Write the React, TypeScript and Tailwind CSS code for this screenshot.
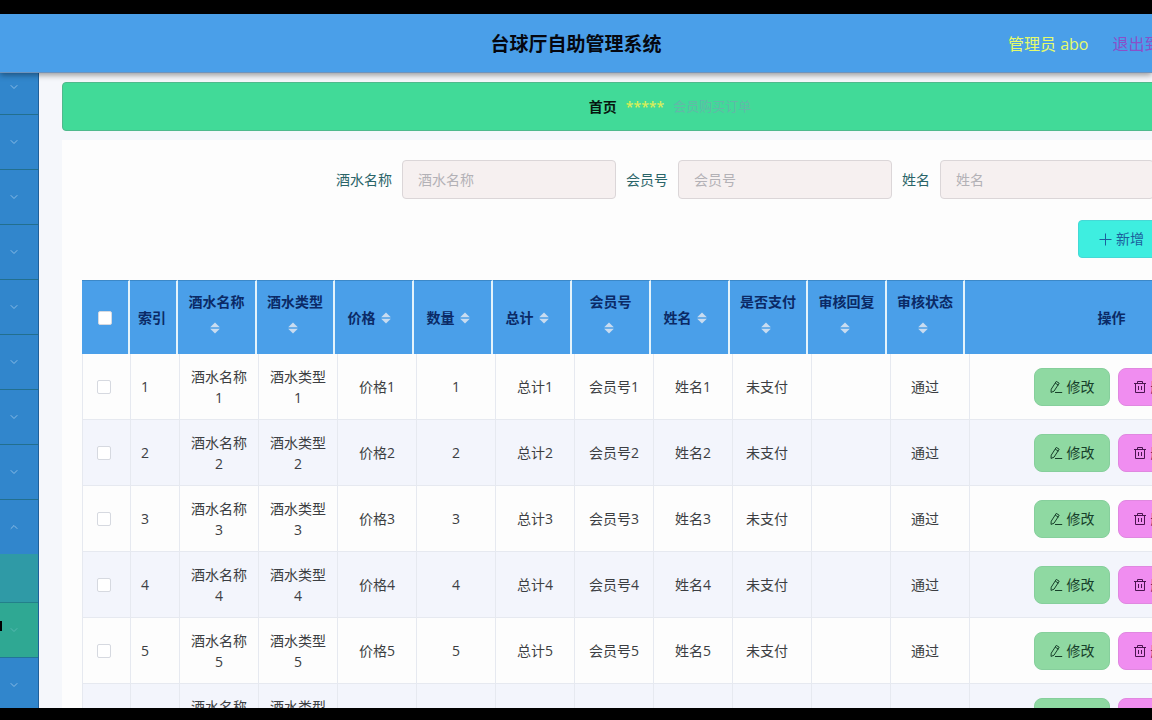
import React, { useState } from 'react';
import { ChevronDown, ChevronUp } from 'lucide-react';

interface Column {
  label: string;
  width: string;
}

const columns: Column[] = [
  { label: '酒水名称', width: 'w-[79px]' },
  { label: '酒水类型', width: 'w-[78px]' },
  { label: '价格', width: 'w-[79px]' },
  { label: '数量', width: 'w-[79px]' },
  { label: '总计', width: 'w-[79px]' },
  { label: '会员号', width: 'w-[79px]' },
  { label: '姓名', width: 'w-[79px]' },
  { label: '是否支付', width: 'w-[78px]' },
  { label: '审核回复', width: 'w-[79px]' },
  { label: '审核状态', width: 'w-[78px]' },
];

const orders = [1, 2, 3, 4, 5, 6].map((n) => ({
  id: n,
  name: `酒水名称${n}`,
  type: `酒水类型${n}`,
  price: `价格${n}`,
  count: `${n}`,
  total: `总计${n}`,
  member: `会员号${n}`,
  person: `姓名${n}`,
  paid: '未支付',
  reply: '',
  status: '通过',
}));

const filters = [
  { id: 'drink', label: '酒水名称' },
  { id: 'member', label: '会员号' },
  { id: 'person', label: '姓名' },
];

const EditIcon = () => (
  <svg viewBox="0 0 14 14" className="w-3.5 h-3.5" fill="none" stroke="currentColor" strokeWidth="1" strokeLinejoin="round" strokeLinecap="round" aria-hidden="true">
    <path d="M7.6 1.6 L10.2 3.2 L5 11.2 L2 12.4 L2.2 9.6 Z" />
    <path d="M6.5 3.3 L9.1 5" />
    <path d="M6.4 12.5 H12.8" />
  </svg>
);

const TrashIcon = () => (
  <svg viewBox="0 0 14 14" className="w-3.5 h-3.5" fill="none" stroke="currentColor" strokeWidth="1" strokeLinejoin="round" aria-hidden="true">
    <path d="M1 3.5 H13" />
    <path d="M4.5 3.5 V1.5 H9.5 V3.5" />
    <path d="M2.5 3.5 V12.5 H11.5 V3.5" />
    <path d="M5.5 6 V10 M8.5 6 V10" />
  </svg>
);

const PlusIcon = () => (
  <svg viewBox="0 0 14 14" className="w-3.5 h-3.5" stroke="currentColor" strokeWidth="1" aria-hidden="true">
    <path d="M1.5 7.5 H13.5 M7.5 1.5 V13.5" />
  </svg>
);

const SortIcon = () => (
  <span className="flex items-center justify-center w-6 h-8 pr-1">
    <svg viewBox="0 0 10 12" className="w-2.5 h-3" fill="#c9dcf0" aria-hidden="true">
      <path d="M5 0.5 L9.8 5.2 H0.2 Z" />
      <path d="M5 11.5 L9.8 6.8 H0.2 Z" />
    </svg>
  </span>
);

const Checkbox: React.FC<{ label: string; checked: boolean; onChange: () => void }> = ({ label, checked, onChange }) => (
  <input
    type="checkbox"
    aria-label={label}
    checked={checked}
    onChange={onChange}
    className="block appearance-none w-3.5 h-3.5 rounded-xs border border-[#d6d9e0] bg-white checked:bg-[#409eff]"
  />
);

const Sidebar = () => (
  <nav aria-label="菜单" className="w-[39px] shrink-0 overflow-hidden border-r border-[#1f5f9a] bg-[#3186cc] text-[#8abce6]">
    {/* scrolled a little past the first entry */}
    <div className="-mt-[13px]">
      {[0, 1, 2, 3, 4, 5, 6, 7].map((i) => (
        <button key={i} aria-label={`菜单 ${i + 1}`} className="flex items-center pl-2 w-full h-[55px] border-b border-[#226f8e]">
          <ChevronDown className="w-3 h-3" strokeWidth={2} />
        </button>
      ))}
      <button aria-label="菜单 9" className="flex items-center pl-2 w-full h-[54px]">
        <ChevronUp className="w-3 h-3" strokeWidth={2} />
      </button>
      <div className="h-[49px] border-b border-[#23808a] bg-[#2f9aa6]" />
      <button aria-label="菜单 10" className="flex items-center pl-2 w-full h-[55px] border-b border-[#22749a] bg-[#2fa893] text-[#56b9b0]">
        <span className="-ml-2 mr-1.5 mb-2 w-0.5 h-2.5 bg-black" />
        <ChevronDown className="w-3 h-3" strokeWidth={2} />
      </button>
      <button aria-label="菜单 11" className="flex items-center pl-2 w-full h-[54px]">
        <ChevronDown className="w-3 h-3" strokeWidth={2} />
      </button>
    </div>
  </nav>
);

const OrderTable = () => {
  const [selected, setSelected] = useState<number[]>([]);

  const toggle = (id: number) =>
    setSelected(selected.includes(id) ? selected.filter((s) => s !== id) : [...selected, id]);

  const toggleAll = () => setSelected(selected.length === orders.length ? [] : orders.map((o) => o.id));

  const headCell = 'h-[74px] border-t border-t-[#3c88c8] border-r-2 border-r-[#e4f3fb]';
  const cell = 'h-[66px] border-r border-b border-[#e6e9f0] px-2.5 text-center leading-[21px]';
  const statusCell = 'h-[66px] border-r border-b border-[#e6e9f0] pr-2.5 text-center leading-[21px]';

  return (
    <div className="mt-[22px]">
      <table className="w-full table-fixed border-separate border-spacing-0 bg-[#4a9fe9] text-[#0b2a66]">
        <colgroup>
          <col className="w-12" />
          <col className="w-12" />
          {columns.map((c) => (
            <col key={c.label} className={c.width} />
          ))}
          <col />
        </colgroup>
        <thead>
          <tr>
            <th scope="col" className={`${headCell} pl-4`}>
              <Checkbox label="全选" checked={selected.length === orders.length} onChange={toggleAll} />
            </th>
            <th scope="col" className={`${headCell} pl-2 text-left`}>索引</th>
            {columns.map((c) => (
              <th key={c.label} scope="col" className={`${headCell} px-2`}>
                <div className="flex flex-wrap items-center justify-center leading-5">
                  <span>{c.label}</span>
                  <SortIcon />
                </div>
              </th>
            ))}
            <th scope="col" className="border-t border-[#3c88c8]">操作</th>
          </tr>
        </thead>
      </table>
      <table className="w-full table-fixed border-separate border-spacing-0 border-l border-[#e6e9f0] text-[#3c3e42]" aria-label="会员购买订单">
        <colgroup>
          <col className="w-12" />
          <col className="w-[49px]" />
          {columns.map((c) => (
            <col key={c.label} className="w-[79px]" />
          ))}
          <col />
        </colgroup>
        <tbody>
          {orders.map((o) => (
            <tr key={o.id} className="bg-[#fdfdfd] even:bg-[#f3f5fc]">
              <td className={cell}>
                <div className="pl-1">
                  <Checkbox label={`选择 ${o.id}`} checked={selected.includes(o.id)} onChange={() => toggle(o.id)} />
                </div>
              </td>
              <td className="h-[66px] border-r border-b border-[#e6e9f0] px-2.5 leading-[21px]">{o.id}</td>
              <td className={cell}>{o.name}</td>
              <td className={cell}>{o.type}</td>
              <td className={cell}>{o.price}</td>
              <td className={cell}>{o.count}</td>
              <td className={cell}>{o.total}</td>
              <td className={cell}>{o.member}</td>
              <td className={cell}>{o.person}</td>
              <td className={statusCell}>{o.paid}</td>
              <td className={cell}>{o.reply}</td>
              <td className={statusCell}>{o.status}</td>
              <td className={cell}>
                <div className="flex justify-center gap-2">
                  <button className="flex items-center justify-center gap-1 w-[76px] h-[38px] rounded-lg border border-[#86cf9c] bg-[#8fd9a2] text-[#17402a]">
                    <EditIcon />
                    修改
                  </button>
                  <button className="flex items-center justify-center gap-1 w-[76px] h-[38px] rounded-lg border border-[#e088e0] bg-[#f08df0] text-[#4a1450]">
                    <TrashIcon />
                    删除
                  </button>
                </div>
              </td>
            </tr>
          ))}
        </tbody>
      </table>
    </div>
  );
};

export default function App() {
  return (
    <div className="flex flex-col h-screen overflow-hidden bg-black pt-3.5 pb-3 text-sm font-['Open_Sans','Noto_Sans_CJK_SC',sans-serif]">
      <header className="relative z-10 grid grid-cols-[1fr_auto_1fr] items-center h-[59px] shrink-0 border-b border-[#6f93bb] bg-[#4a9fe9] shadow-[0_2px_6px_rgba(0,0,0,0.4)]">
        <span />
        <h1 className="pt-1 text-[19px] font-bold text-[#05070f]">台球厅自助管理系统</h1>
        <div className="flex gap-6 ml-auto w-36 pt-0.5 overflow-hidden whitespace-nowrap text-base">
          <span className="text-[#e6fb6a]">管理员 abo</span>
          <a href="#front" className="text-[#8a4fc9]">退出到前台</a>
        </div>
      </header>

      <div className="flex flex-1 min-h-0 overflow-hidden bg-[#f5f7fb]">
        <Sidebar />
        {/* wider than the window, the right edge scrolls out */}
        <main className="min-w-[1239px] flex-1 pl-[23px] pt-[9px]">
          <div className="flex items-center justify-center gap-[9px] h-[49px] rounded-sm border border-[#4fb98c] bg-[#41da98]">
            <a href="#home" className="font-bold text-[#06170f]">首页</a>
            <span className="font-semibold text-[#d8ee58]">*****</span>
            <span className="text-[13px] text-[#63b8a8]">会员购买订单</span>
          </div>

          <section className="mt-[9px] px-5 pt-5 bg-[#fdfdfd]">
            <form className="flex items-center justify-end gap-2.5">
              {filters.map((f) => (
                <div key={f.id} className="flex items-center gap-2.5">
                  <label htmlFor={f.id} className="text-[#2a6468]">{f.label}</label>
                  <input
                    id={f.id}
                    type="text"
                    placeholder={f.label}
                    className="w-[214px] h-[39px] px-[15px] rounded-sm border border-[#dbd6d8] bg-[#f6f0f0] placeholder:text-[#b3b1b6]"
                  />
                </div>
              ))}
              <button type="button" className="w-[94px] h-[38px] rounded-sm bg-[#3eeee0] text-[#1b5f9c]">查询</button>
            </form>

            <div className="flex justify-end gap-2 mt-[21px]">
              <button className="flex items-center justify-center gap-1 w-[86px] h-[38px] rounded-sm border border-[#45d9d6] bg-[#3eeee0] text-[#1b5f9c]">
                <PlusIcon />
                新增
              </button>
              <button className="flex items-center justify-center gap-1 w-[86px] h-[38px] rounded-sm border border-[#45d9d6] bg-[#3eeee0] text-[#1b5f9c]">
                <TrashIcon />
                删除
              </button>
            </div>

            <OrderTable />
          </section>
        </main>
      </div>
    </div>
  );
}
